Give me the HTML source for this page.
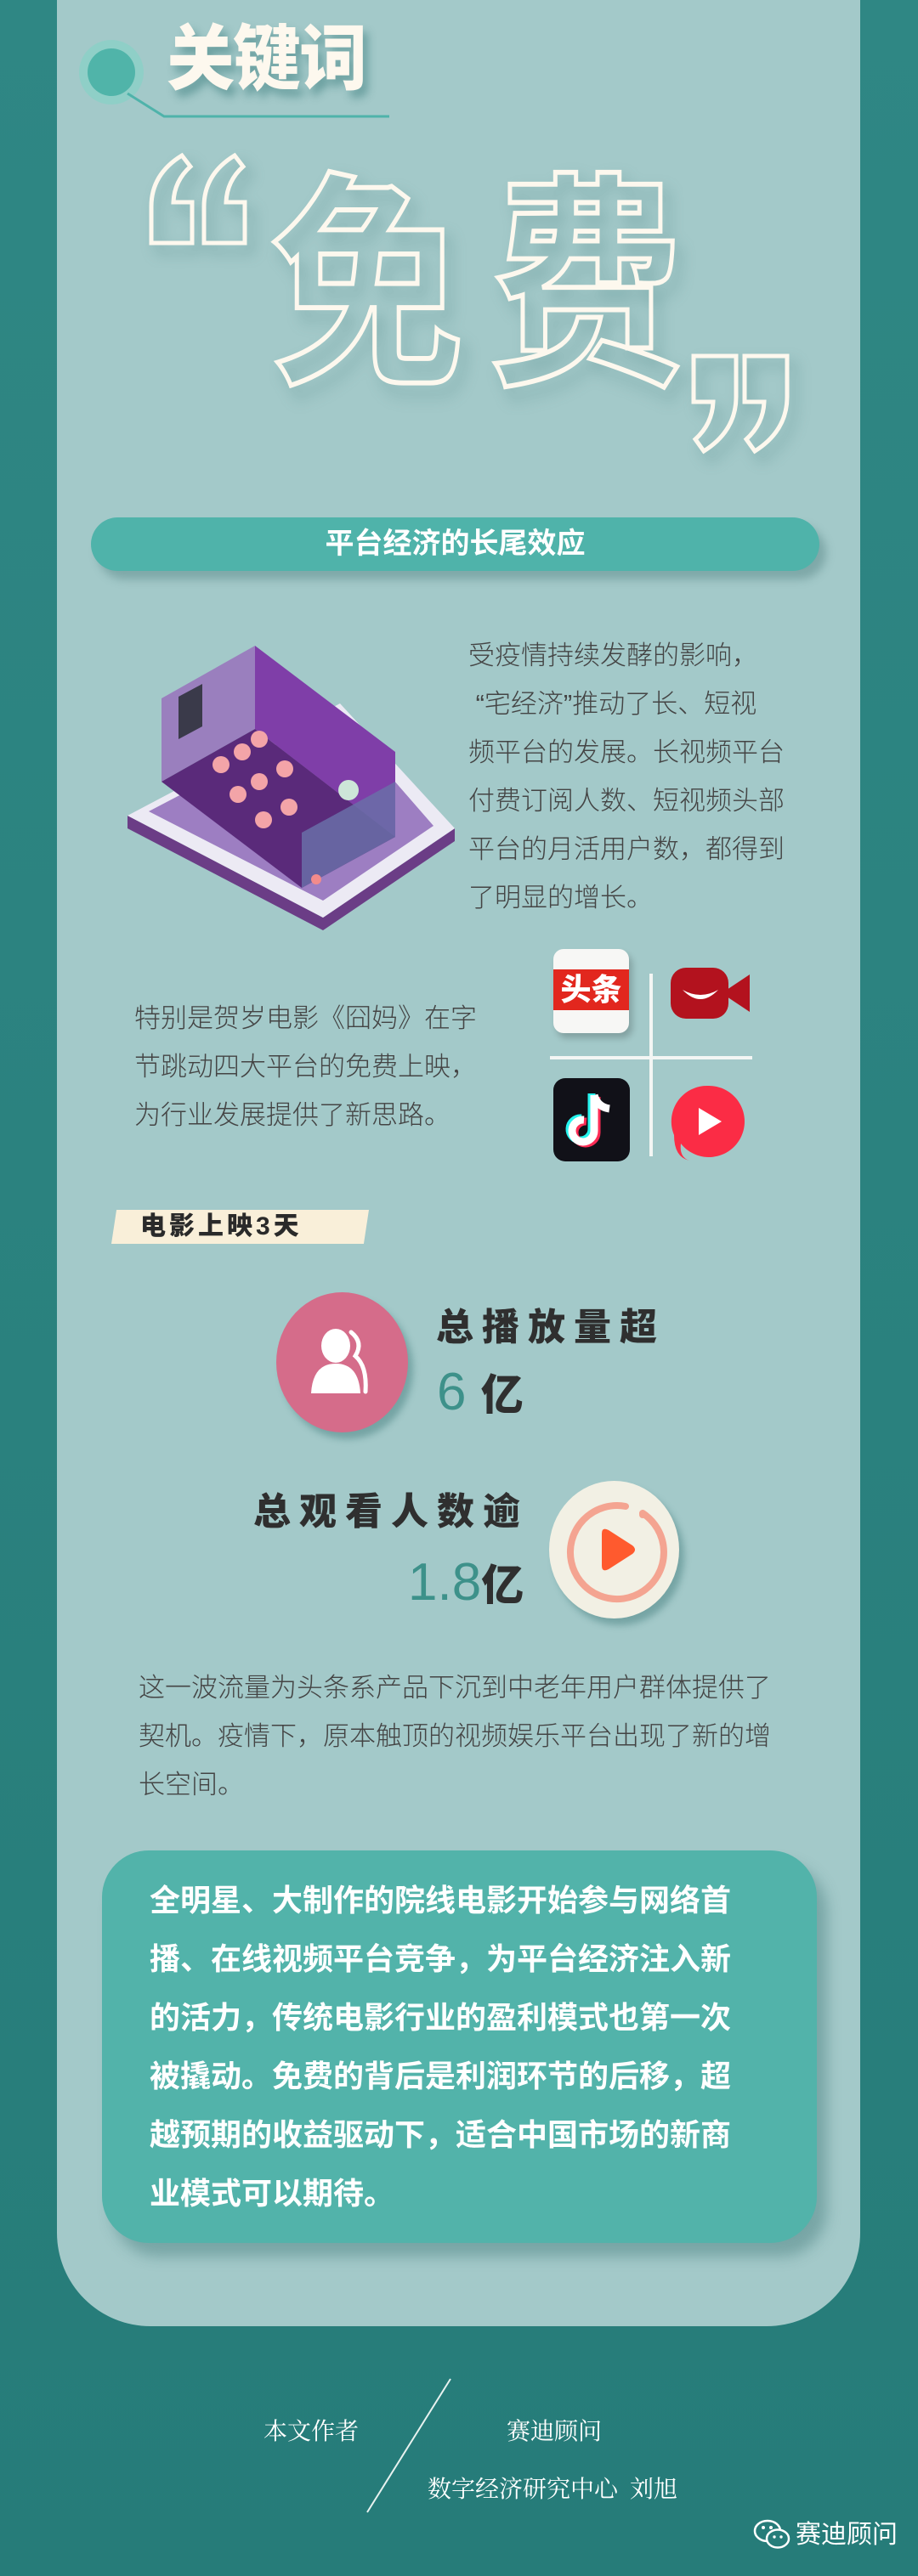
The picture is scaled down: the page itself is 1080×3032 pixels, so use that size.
<!DOCTYPE html>
<html><head><meta charset="utf-8">
<style>
*{margin:0;padding:0;box-sizing:border-box}
html,body{width:1080px;height:3032px;overflow:hidden}
body{background:linear-gradient(#2f8784,#267c79);position:relative;font-family:"Liberation Sans","Noto Sans CJK SC",sans-serif;color:#3c3c3c}
.abs{position:absolute}
#panel{left:67px;top:0;width:945px;height:2738px;background:#a3c9c9;border-radius:0 0 110px 110px}
.title{left:196px;top:30px;font-size:80px;font-weight:900;color:#fdf8ee;letter-spacing:-2px;text-shadow:6px 8px 10px rgba(40,110,110,.45);line-height:1;transform:scaleY(1.05)}
.big{font-weight:700;color:transparent;-webkit-text-stroke:5px #fdf8ee;line-height:1;filter:drop-shadow(8px 10px 8px rgba(50,110,110,.35))}
.p{font-size:31px;line-height:57px;color:#444;font-weight:300}
.w{color:#fff;font-weight:700;font-size:36px;line-height:69px}
.serif{font-family:"Liberation Serif","Noto Serif CJK SC",serif;color:#fff;font-size:28px}
</style></head><body>
<div class="abs" id="panel"></div>

<svg class="abs" style="left:0;top:0" width="500" height="160">
<circle cx="131" cy="85" r="38" fill="#8fcfc7"/>
<circle cx="131" cy="85" r="28" fill="#50b4a9"/>
<polyline points="150,110 193,137 458,137" fill="none" stroke="#4fb3aa" stroke-width="3"/>
</svg>
<div class="abs title">关键词</div>

<svg class="abs" style="left:0;top:0;filter:drop-shadow(8px 10px 8px rgba(50,110,110,.35))" width="1080" height="600">
<g fill="none" stroke="#fdf8ee" stroke-width="5" stroke-linejoin="miter">
<path transform="translate(178,183)" d="M0 103 L0 60 Q0 22 36 0 L46 13 Q27 30 26 55 L48 55 L48 103 Z"/>
<path transform="translate(240,183)" d="M0 103 L0 60 Q0 22 36 0 L46 13 Q27 30 26 55 L48 55 L48 103 Z"/>
<path transform="translate(866,531) rotate(180)" d="M0 112 L0 64 Q0 24 38 0 L48 14 Q28 32 27 58 L50 58 L50 112 Z"/>
<path transform="translate(926,531) rotate(180)" d="M0 112 L0 64 Q0 24 38 0 L48 14 Q28 32 27 58 L50 58 L50 112 Z"/>
</g></svg>
<div class="abs big" style="left:318px;top:205px;font-size:228px;letter-spacing:30px;transform:scaleY(1.18);transform-origin:0 0">免费</div>

<div class="abs" style="left:107px;top:609px;width:857px;height:63px;border-radius:32px;background:#4fb3aa;box-shadow:8px 10px 10px rgba(60,110,110,.35);color:#fff;font-weight:700;font-size:34px;text-align:center;line-height:63px">平台经济的长尾效应</div>

<svg class="abs" style="left:140px;top:745px" width="400" height="360" viewBox="140 745 400 360">
<polygon points="150,975 380,1095 535,990 535,975 380,1080 150,960" fill="#6b3d86"/>
<polygon points="150,960 400,828 535,975 380,1080" fill="#eceaf4"/>
<polygon points="175,955 395,840 510,972 380,1060" fill="#9d7ec2"/>
<polygon points="190,920 300,858 300,760 190,822" fill="#9a7fbe"/>
<polygon points="300,760 465,885 465,985 300,858" fill="#7f3ea8"/>
<polygon points="190,920 300,858 465,985 355,1045" fill="#5a2a7a"/>
<polygon points="355,1045 465,985 465,920 355,980" fill="#6a6fa8" opacity=".85"/>
<polygon points="210,870 238,855 238,805 210,820" fill="#3a3a4a"/>
<circle cx="372" cy="1035" r="6" fill="#f28b8b"/>
<g fill="#f3a4a8"><circle cx="260" cy="900" r="10"/><circle cx="285" cy="885" r="10"/><circle cx="305" cy="870" r="10"/><circle cx="280" cy="935" r="10"/><circle cx="305" cy="920" r="10"/><circle cx="335" cy="905" r="10"/><circle cx="310" cy="965" r="10"/><circle cx="340" cy="950" r="10"/></g>
<circle cx="410" cy="930" r="12" fill="#cde6d8"/>
</svg>

<div class="abs p" style="left:551px;top:743px;width:380px">受疫情持续发酵的影响，<br>&nbsp;“宅经济”推动了长、短视<br>频平台的发展。长视频平台<br>付费订阅人数、短视频头部<br>平台的月活用户数，都得到<br>了明显的增长。</div>

<div class="abs p" style="left:158px;top:1170px;width:420px">特别是贺岁电影《囧妈》在字<br>节跳动四大平台的免费上映，<br>为行业发展提供了新思路。</div>

<div class="abs" style="left:764px;top:1146px;width:4px;height:215px;background:#f3f6f4"></div>
<div class="abs" style="left:647px;top:1243px;width:238px;height:4px;background:#f3f6f4"></div>
<div class="abs" style="left:651px;top:1117px;width:89px;height:99px;border-radius:12px;background:#f7f7f5;box-shadow:4px 6px 8px rgba(0,0,0,.2);overflow:hidden">
 <div style="position:absolute;left:0;top:24px;width:89px;height:48px;background:#e2271e;color:#fff;font-weight:900;font-size:36px;line-height:48px;text-align:center">头条</div></div>
<svg class="abs" style="left:789px;top:1135px" width="95" height="68" viewBox="0 0 95 68">
<rect x="0" y="4" width="68" height="60" rx="18" fill="#b3121e"/><polygon points="60,34 93,12 93,56" fill="#b3121e"/>
<path d="M14 30 Q35 52 56 30 Q35 42 14 30Z" fill="#fff"/></svg>
<svg class="abs" style="left:651px;top:1269px" width="90" height="98" viewBox="0 0 90 98">
<rect width="90" height="98" rx="14" fill="#111118"/>
<path d="M48 20 V62 A13 13 0 1 1 36 49" fill="none" stroke="#25f4ee" stroke-width="9" transform="translate(-3,-2)"/>
<path d="M48 20 V62 A13 13 0 1 1 36 49" fill="none" stroke="#fe2c55" stroke-width="9" transform="translate(3,2)"/>
<path d="M48 20 V62 A13 13 0 1 1 36 49 M48 20 Q52 34 66 36" fill="none" stroke="#fff" stroke-width="9"/></svg>
<svg class="abs" style="left:789px;top:1276px" width="88" height="92" viewBox="0 0 88 92">
<path d="M44 2 A42 42 0 1 1 12 70 Q10 86 22 90 Q4 86 4 60 A42 42 0 0 1 44 2Z" fill="#fb2c45"/>
<polygon points="33,28 33,60 60,44" fill="#fff"/></svg>

<div class="abs" style="left:131px;top:1424px;width:303px;height:40px;background:#f9efd9;clip-path:polygon(2% 0,100% 0,98% 100%,0 100%)"></div>
<div class="abs" style="left:165px;top:1424px;font-size:30px;font-weight:900;color:#2a2a2a;letter-spacing:4px;line-height:40px">电影上映3天</div>

<div class="abs" style="left:325px;top:1521px;width:155px;height:165px;border-radius:50%;background:#d56c8a;box-shadow:6px 8px 8px rgba(50,110,110,.4)"></div>
<svg class="abs" style="left:360px;top:1560px" width="85" height="85" viewBox="0 0 85 85">
<ellipse cx="35" cy="24" rx="17" ry="20" fill="#fff"/><path d="M6 80 Q8 45 35 45 Q62 45 64 80Z" fill="#fff"/>
<path d="M53 8 Q68 20 58 36 Q72 48 70 78" fill="none" stroke="#fff" stroke-width="5" stroke-linecap="round"/></svg>
<div class="abs" style="left:513px;top:1535px;font-size:44px;font-weight:900;color:#2f2f2f;letter-spacing:10px;line-height:56px">总播放量超</div>
<div class="abs" style="left:514px;top:1604px;font-size:62px;color:#3d918a;line-height:70px">6 <span style="color:#2f2f2f;font-weight:900;font-size:50px">亿</span></div>

<div class="abs" style="left:298px;top:1752px;font-size:44px;font-weight:900;color:#2f2f2f;letter-spacing:10px;line-height:56px">总观看人数逾</div>
<div class="abs" style="left:480px;top:1828px;font-size:62px;color:#3d918a;line-height:70px">1.8<span style="color:#2f2f2f;font-weight:900;font-size:50px">亿</span></div>
<div class="abs" style="left:646px;top:1743px;width:153px;height:162px;border-radius:50%;background:#f2f0e4;box-shadow:6px 8px 8px rgba(50,110,110,.4)"></div>
<svg class="abs" style="left:646px;top:1743px" width="153" height="162" viewBox="0 0 153 162">
<path d="M110 36 A55 55 0 1 1 90 28" fill="none" stroke="#f4a491" stroke-width="8" stroke-linecap="round" transform="translate(0,2)"/>
<circle cx="110" cy="40" r="4" fill="#f4a491"/>
<path d="M62 62 Q62 54 70 58 L98 76 Q104 81 98 86 L70 104 Q62 108 62 100Z" fill="#ff5a2e"/></svg>

<div class="abs p" style="left:163px;top:1958px;width:770px">这一波流量为头条系产品下沉到中老年用户群体提供了<br>契机。疫情下，原本触顶的视频娱乐平台出现了新的增<br>长空间。</div>

<div class="abs" style="left:120px;top:2178px;width:841px;height:462px;border-radius:55px;background:#52b3aa;box-shadow:12px 16px 16px rgba(40,100,100,.35)"></div>
<div class="abs w" style="left:176px;top:2202px;width:760px">全明星、大制作的院线电影开始参与网络首<br>播、在线视频平台竞争，为平台经济注入新<br>的活力，传统电影行业的盈利模式也第一次<br>被撬动。免费的背后是利润环节的后移，超<br>越预期的收益驱动下，适合中国市场的新商<br>业模式可以期待。</div>

<div class="abs serif" style="left:310px;top:2840px">本文作者</div>
<svg class="abs" style="left:420px;top:2790px" width="120" height="180"><line x1="110" y1="10" x2="12" y2="167" stroke="#e8f2f0" stroke-width="2"/></svg>
<div class="abs serif" style="left:596px;top:2840px">赛迪顾问</div>
<div class="abs serif" style="left:503px;top:2908px">数字经济研究中心&nbsp;&nbsp;刘旭</div>
<svg class="abs" style="left:886px;top:2963px" width="46" height="40" viewBox="0 0 46 40">
<ellipse cx="17" cy="16" rx="15" ry="12" fill="none" stroke="#fff" stroke-width="2.5"/>
<ellipse cx="29" cy="25" rx="13" ry="10.5" fill="#267d7a" stroke="#fff" stroke-width="2.5"/>
<circle cx="12" cy="12" r="2" fill="#fff"/><circle cx="21" cy="12" r="2" fill="#fff"/><circle cx="25" cy="23" r="1.7" fill="#fff"/><circle cx="33" cy="23" r="1.7" fill="#fff"/></svg>
<div class="abs" style="left:936px;top:2964px;color:#fff;font-size:30px;line-height:40px">赛迪顾问</div>
</body></html>
